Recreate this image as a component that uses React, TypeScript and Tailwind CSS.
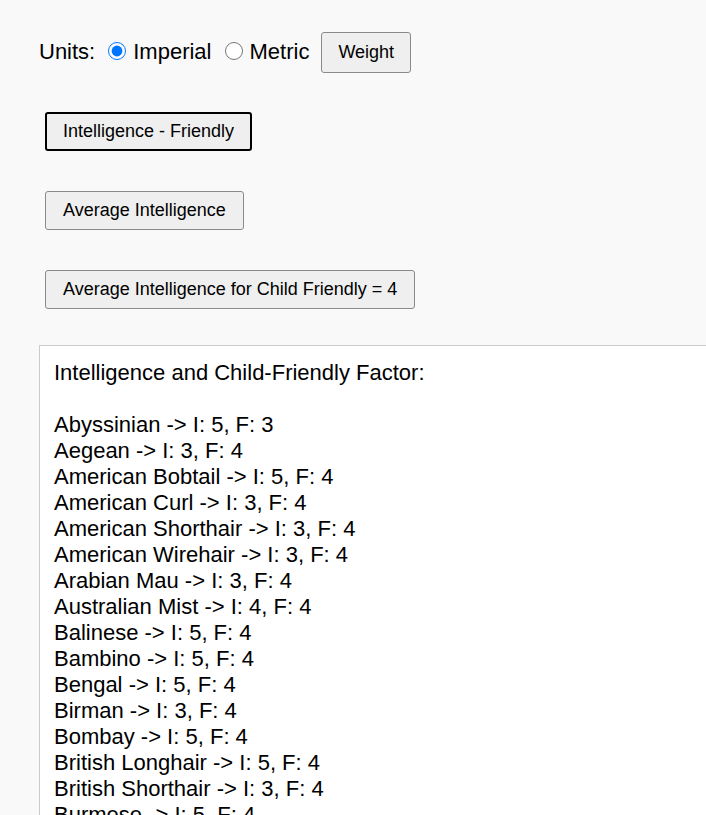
import { useState } from 'react';

const breeds: [string, number, number][] = [
  ['Abyssinian', 5, 3],
  ['Aegean', 3, 4],
  ['American Bobtail', 5, 4],
  ['American Curl', 3, 4],
  ['American Shorthair', 3, 4],
  ['American Wirehair', 3, 4],
  ['Arabian Mau', 3, 4],
  ['Australian Mist', 4, 4],
  ['Balinese', 5, 4],
  ['Bambino', 5, 4],
  ['Bengal', 5, 4],
  ['Birman', 3, 4],
  ['Bombay', 5, 4],
  ['British Longhair', 5, 4],
  ['British Shorthair', 3, 4],
  ['Burmese', 5, 4],
  ['Burmilla', 3, 4],
];

const btn =
  'block bg-[#efefef] text-black text-[18px] leading-[21px] rounded-[3px] whitespace-nowrap';

export default function App() {
  const [units, setUnits] = useState('imperial');

  return (
    <div
      className="min-h-screen bg-[#f9f9f9] text-black overflow-hidden pl-[39px] pt-[32px]"
      style={{ fontFamily: '"Liberation Sans", Arial, sans-serif' }}
    >
      <div className="flex items-center h-[40px] text-[22px]">
        <span className="mt-[-2px]">Units:</span>
        <label className="flex items-center ml-[13px] mt-[-2px]">
          <input
            type="radio"
            name="units"
            className="m-0 w-[18px] h-[18px] accent-[#0075ff]"
            checked={units === 'imperial'}
            onChange={() => setUnits('imperial')}
          />
          <span className="ml-[7px]">Imperial</span>
        </label>
        <label className="flex items-center ml-[13px] mt-[-2px]">
          <input
            type="radio"
            name="units"
            className="m-0 w-[18px] h-[18px]"
            checked={units === 'metric'}
            onChange={() => setUnits('metric')}
          />
          <span className="ml-[7px]">Metric</span>
        </label>
        <button className={`${btn} ml-[12px] border border-[#8a8a8a] px-[16px] py-[9px]`}>
          Weight
        </button>
      </div>

      <div className="ml-[6px] mt-[40px] flex flex-col items-start gap-[40px]">
        <button className={`${btn} border-2 border-black px-[16px] py-[7px]`}>
          Intelligence - Friendly
        </button>
        <button className={`${btn} border border-[#8a8a8a] px-[17px] py-[8px]`}>
          Average Intelligence
        </button>
        <button className={`${btn} border border-[#8a8a8a] px-[17px] py-[8px]`}>
          Average Intelligence for Child Friendly = 4
        </button>
      </div>

      <div className="mt-[36px] w-[720px] bg-white border border-[#cccccc] pt-[14px] pl-[14px] pb-4 text-[22px] leading-[26px] whitespace-pre">
        <div>Intelligence and Child-Friendly Factor:</div>
        <div className="h-[26px]" />
        {breeds.map(([name, i, f]) => (
          <div key={name}>
            {name} -&gt; I: {i}, F: {f}
          </div>
        ))}
      </div>
    </div>
  );
}
